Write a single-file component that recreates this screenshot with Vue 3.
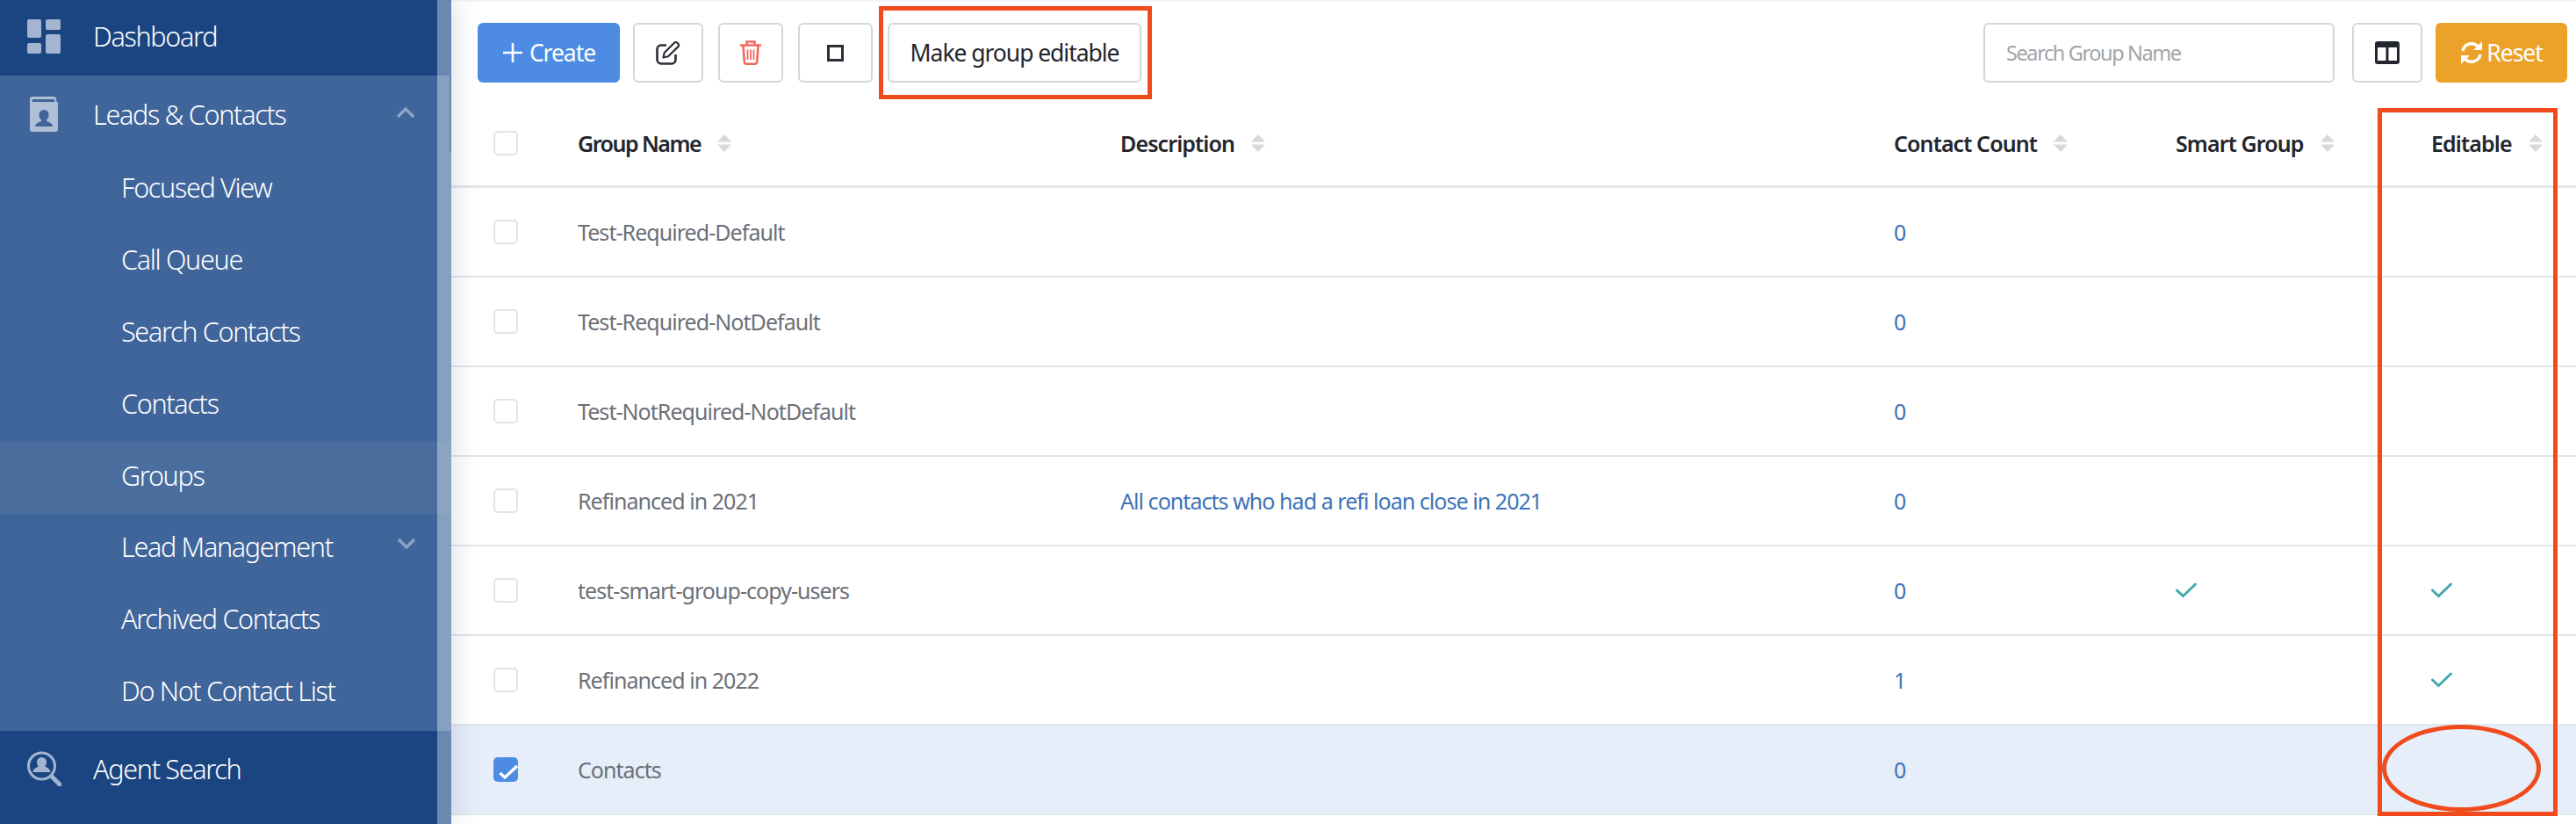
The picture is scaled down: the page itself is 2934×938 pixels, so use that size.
<script setup>
const subItems = [
  { label: 'Focused View' },
  { label: 'Call Queue' },
  { label: 'Search Contacts' },
  { label: 'Contacts' },
  { label: 'Groups', active: true },
  { label: 'Lead Management', chevron: true },
  { label: 'Archived Contacts' },
  { label: 'Do Not Contact List' },
]
const rows = [
  { name: 'Test-Required-Default', desc: '', count: 0 },
  { name: 'Test-Required-NotDefault', desc: '', count: 0 },
  { name: 'Test-NotRequired-NotDefault', desc: '', count: 0 },
  { name: 'Refinanced in 2021', desc: 'All contacts who had a refi loan close in 2021', count: 0 },
  { name: 'test-smart-group-copy-users', desc: '', count: 0, smart: true, editable: true },
  { name: 'Refinanced in 2022', desc: '', count: 1, editable: true },
  { name: 'Contacts', desc: '', count: 0, selected: true },
]
const headers = [
  { label: 'Group Name', cls: 'c-name' },
  { label: 'Description', cls: 'c-desc' },
  { label: 'Contact Count', cls: 'c-count' },
  { label: 'Smart Group', cls: 'c-smart' },
  { label: 'Editable', cls: 'c-edit' },
]
</script>

<template>
  <div class="page">
    <aside class="sidebar">
      <nav class="nav">
        <div class="top-item dash">
          <svg class="nav-icon" viewBox="0 0 40 40"><g fill="#a3b5d0"><rect x="1" y="1" width="16" height="21" rx="2"/><rect x="22" y="1" width="17" height="12" rx="2"/><rect x="1" y="28" width="16" height="12" rx="2"/><rect x="22" y="18" width="17" height="22" rx="2"/></g></svg>
          <span>Dashboard</span>
        </div>
        <div class="group">
          <div class="top-item leads">
            <svg class="nav-icon" viewBox="0 0 40 40"><path fill="#aebfd6" fill-rule="evenodd" d="M7 0h24a3 3 0 0 1 3 3v2a3 3 0 0 1 2 3v29a3 3 0 0 1-3 3H7a3 3 0 0 1-3-3V3a3 3 0 0 1 3-3zm1 3a1 1 0 0 0 0 3h23a1 1 0 0 0 0-3zm12 12a5.500 5.500 0 0 0-5.500 6c0 2.500 1.300 4.500 2.500 5.500v1.500c-2.500 1-7 2.500-7 6h20c0-3.500-4.500-5-7-6v-1.500c1.200-1 2.500-3 2.500-5.500a5.500 5.500 0 0 0-5.500-6z"/></svg>
            <span>Leads &amp; Contacts</span>
            <svg class="chev up" viewBox="0 0 22 14"><path d="M2 12 11 3l9 9" fill="none" stroke="#8fa5c5" stroke-width="3.200"/></svg>
          </div>
          <div v-for="item in subItems" :key="item.label" class="sub-item" :class="{ active: item.active }">
            <span>{{ item.label }}</span>
            <svg v-if="item.chevron" class="chev down" viewBox="0 0 22 14"><path d="M2 2l9 9 9-9" fill="none" stroke="#8fa5c5" stroke-width="3.200"/></svg>
          </div>
        </div>
        <div class="top-item agent">
          <svg class="nav-icon" viewBox="0 0 40 40"><circle cx="17.500" cy="17" r="15" fill="none" stroke="#a3b5d0" stroke-width="3"/><path fill="#a3b5d0" d="M17.500 7a5.500 5.500 0 0 1 5.500 6c0 2-.8 3.300-1.800 4.300.2.800 6 2 6.300 6.700H7.500c.3-4.700 6.100-5.900 6.300-6.700-1-1-1.800-2.300-1.800-4.300a5.500 5.500 0 0 1 5.500-6z"/><path d="M29 29l9 9" stroke="#a3b5d0" stroke-width="5" stroke-linecap="round"/></svg>
          <span>Agent Search</span>
        </div>
      </nav>
      <div class="rail"><i class="thumb"></i></div>
    </aside>

    <main class="main">
      <div class="toolbar">
        <div class="actions">
          <button class="btn primary create">
            <svg class="plus" viewBox="0 0 24 24"><path d="M12 1v22M1 12h22" stroke="#fff" stroke-width="2.600"/></svg>
            Create
          </button>
          <button class="btn icon edit">
            <svg viewBox="0 0 28 28" width="28" height="28"><path d="M12 5.500H6a4.500 4.500 0 0 0-4.500 4.500v12A4.500 4.500 0 0 0 6 26.500h12a4.500 4.500 0 0 0 4.500-4.500v-6" fill="none" stroke="#2a2e36" stroke-width="2.600"/><path d="M8.500 19.500l1.200-5.500L21 2.700a2.400 2.400 0 0 1 3.400 0l1 1a2.400 2.400 0 0 1 0 3.400L14 18.300z" fill="none" stroke="#2a2e36" stroke-width="2.200" stroke-linejoin="round"/></svg>
          </button>
          <button class="btn icon trash">
            <svg viewBox="0 0 24 28" width="24" height="28"><g fill="none" stroke="#f4695f" stroke-width="2.600"><path d="M0 5.500h24M7.500 5V1.500h9V5M3.500 6l1.300 18.500a2.200 2.200 0 0 0 2.200 2.200h10a2.200 2.200 0 0 0 2.200-2.200L20.500 6"/><path d="M8.500 10.500V22M12 10.500V22M15.500 10.500V22" stroke-width="1.800"/></g></svg>
          </button>
          <button class="btn icon square"><i class="sq"></i></button>
          <span class="callout">
            <button class="btn make">Make group editable</button>
          </span>
        </div>
        <div class="right-actions">
          <input class="search" placeholder="Search Group Name" />
          <button class="btn icon cols">
            <svg viewBox="0 0 28 26" width="28" height="26"><path fill="#23262e" fill-rule="evenodd" d="M3 0h22a3 3 0 0 1 3 3v20a3 3 0 0 1-3 3H3a3 3 0 0 1-3-3V3a3 3 0 0 1 3-3zm0 7v15h9.500V7zm12.500 0v15H25V7z"/></svg>
          </button>
          <button class="btn reset">
            <svg viewBox="0 0 26 30" width="26" height="30"><g fill="none" stroke="#fff" stroke-width="3.400"><path d="M3 13a10 10 0 0 1 18-4"/><path d="M23 17a10 10 0 0 1-18 4"/></g><path fill="#fff" d="M25 2v10H15zM1 28V18h10z"/></svg>
            Reset
          </button>
        </div>
      </div>

      <div class="table">
        <div class="tr head">
          <div class="c-check"><span class="cb"></span></div>
          <div v-for="h in headers" :key="h.label" class="th" :class="h.cls">
            {{ h.label }}
            <svg class="sort" viewBox="0 0 16 20"><path fill="#d8d8d8" d="M8 0l8 8.500H0zM0 11.500h16L8 20z"/></svg>
          </div>
        </div>
        <div v-for="row in rows" :key="row.name" class="tr body" :class="{ selected: row.selected }">
          <div class="c-check">
            <span class="cb" :class="{ on: row.selected }">
              <svg v-if="row.selected" viewBox="0 0 28 28" width="28" height="28"><path d="M7.500 18l5.500 5L27 10" fill="none" stroke="#fff" stroke-width="3.400"/></svg>
            </span>
          </div>
          <div class="c-name">{{ row.name }}</div>
          <div class="c-desc link">{{ row.desc }}</div>
          <div class="c-count link">{{ row.count }}</div>
          <div class="c-smart">
            <svg v-if="row.smart" class="tick" viewBox="0 0 24 18"><path d="M1.500 9l7 6.500L22.500 2" fill="none" stroke="#41a8ad" stroke-width="3" stroke-linecap="round"/></svg>
          </div>
          <div class="c-edit">
            <svg v-if="row.editable" class="tick" viewBox="0 0 24 18"><path d="M1.500 9l7 6.500L22.500 2" fill="none" stroke="#41a8ad" stroke-width="3" stroke-linecap="round"/></svg>
          </div>
        </div>
      </div>

      <div class="edit-frame"><i class="edit-ring"></i></div>
    </main>
  </div>
</template>

<style>
html, body { margin: 0; background: #fff; }
</style>

<style scoped>
.page {
  width: 2934px;
  height: 938px;
  display: flex;
  overflow: hidden;
  font-family: "Noto Sans", "Open Sans", sans-serif;
  background: #fff;
}
.sidebar {
  width: 514px;
  flex: none;
  display: flex;
  background: #1b4580;
  box-shadow: 6px 0 26px rgba(40, 60, 90, .14);
  position: relative;
  z-index: 1;
}
.nav { width: 498px; flex: none; color: #fff; }
.rail {
  width: 16px;
  flex: none;
  position: relative;
  background: linear-gradient(#6b88b3 0 86px, #87a0c1 86px 503px, #8ca4c2 503px 585px, #87a0c1 585px 832px, #6b88b3 832px);
}
.thumb { position: absolute; top: 86px; right: 0; width: 2px; height: 88px; background: #6b85a8; }
.top-item {
  display: flex;
  align-items: center;
  padding-left: 30px;
  box-sizing: border-box;
  font-size: 30.500px;
  font-weight: 300;
  letter-spacing: -1.300px;
  position: relative;
}
.top-item span { margin-left: 36px; }
.nav-icon { width: 40px; height: 40px; flex: none; }
.dash { height: 86px; padding-bottom: 4px; }
.group { background: #40659a; height: 746px; }
.leads { height: 90px; padding-bottom: 3px; }
.agent { height: 106px; padding-bottom: 20px; }
.sub-item {
  height: 81.800px;
  box-sizing: border-box;
  display: flex;
  align-items: center;
  padding-left: 138px;
  padding-bottom: 7px;
  font-size: 30.500px;
  font-weight: 300;
  letter-spacing: -1.300px;
  position: relative;
}
.sub-item.active { background: #4a6f9e; }
.chev { position: absolute; width: 22px; height: 14px; }
.chev.up { right: 25px; top: 35px; }
.chev.down { right: 24px; top: 27px; }

.main {
  flex: 1;
  min-width: 0;
  position: relative;
}
.main::before {
  content: "";
  position: absolute;
  left: 0;
  right: 0;
  top: 0;
  height: 2px;
  background: #f3f4f5;
}
.toolbar {
  padding-top: 26px;
  box-sizing: border-box;
  height: 120px;
  display: flex;
  justify-content: space-between;
  padding-left: 30px;
  padding-right: 10px;
}
.actions, .right-actions { display: flex; align-items: flex-start; }
.btn {
  height: 68px;
  box-sizing: border-box;
  border: 2px solid #d3d6dc;
  border-radius: 6px;
  background: #fff;
  display: inline-flex;
  align-items: center;
  justify-content: center;
  font-family: inherit;
  font-size: 26.500px;
  letter-spacing: -1.050px;
  color: #23262e;
  padding: 0;
}
.primary, .reset { border: 0; color: #fff; }
.primary { background: #4d8ce2; }
.reset { background: #eca229; width: 150px; margin-left: 15px; gap: 4px; }
.create { width: 162px; gap: 7px; }
.plus { width: 24px; height: 24px; }
.edit { width: 80px; margin-left: 15px; }
.trash { width: 74px; margin-left: 17px; }
.square { width: 85px; margin-left: 17px; }
.sq { width: 19px; height: 19px; box-sizing: border-box; border: 3px solid #2a2e36; display: block; }
.callout {
  display: block;
  margin-left: 7px;
  margin-top: -19px;
  padding: 14px 7px 14px 5px;
  border: 5px solid #f04a1d;
}
.make { width: 289px; }
.search {
  width: 400px;
  height: 68px;
  box-sizing: border-box;
  border: 2px solid #d3d6dc;
  border-radius: 6px;
  padding: 0 24px;
  font-family: inherit;
  font-size: 23.500px;
  letter-spacing: -1.400px;
  outline: none;
}
.search::placeholder { color: #a2a4a8; opacity: 1; }
.cols { width: 80px; margin-left: 20px; }

.tr {
  display: grid;
  grid-template-columns: 144px 618px 881px 321px 291px 1fr;
  align-items: center;
  border-bottom: 2px solid #e3e6ea;
  box-sizing: border-box;
  height: 102px;
  font-size: 25px;
  letter-spacing: -.95px;
  color: #6c7078;
}
.head {
  height: 94px;
  border-bottom-width: 3px;
  padding-bottom: 6px;
  color: #23262e;
  font-weight: 600;
  letter-spacing: -.9px;
}
.selected { background: #e6eef9; }
.c-check { padding-left: 48px; display: flex; }
.cb {
  width: 28px;
  height: 28px;
  box-sizing: border-box;
  border: 2px solid #e1e4ea;
  border-radius: 5px;
  display: block;
  overflow: hidden;
  background: #fff;
}
.cb.on { background: #4d8ce2; border: 0; }
.cb svg { display: block; }
.th { display: flex; align-items: center; white-space: nowrap; }
.th.c-name { letter-spacing: -1.500px; }
.sort {
  display: block;
  width: 16px;
  height: 20px;
  margin-left: 19px;
  flex: none;
}
.link { color: #3d73b8; }
.tick { width: 24px; height: 18px; display: block; }
.edit-frame {
  position: absolute;
  left: 2194px;
  top: 123px;
  width: 205px;
  height: 806px;
  box-sizing: border-box;
  border: 5px solid #f04a1d;
}
.edit-ring {
  position: absolute;
  left: 0;
  top: 697px;
  width: 181px;
  height: 99px;
  box-sizing: border-box;
  border: 5px solid #f04a1d;
  border-radius: 50%;
}
</style>
